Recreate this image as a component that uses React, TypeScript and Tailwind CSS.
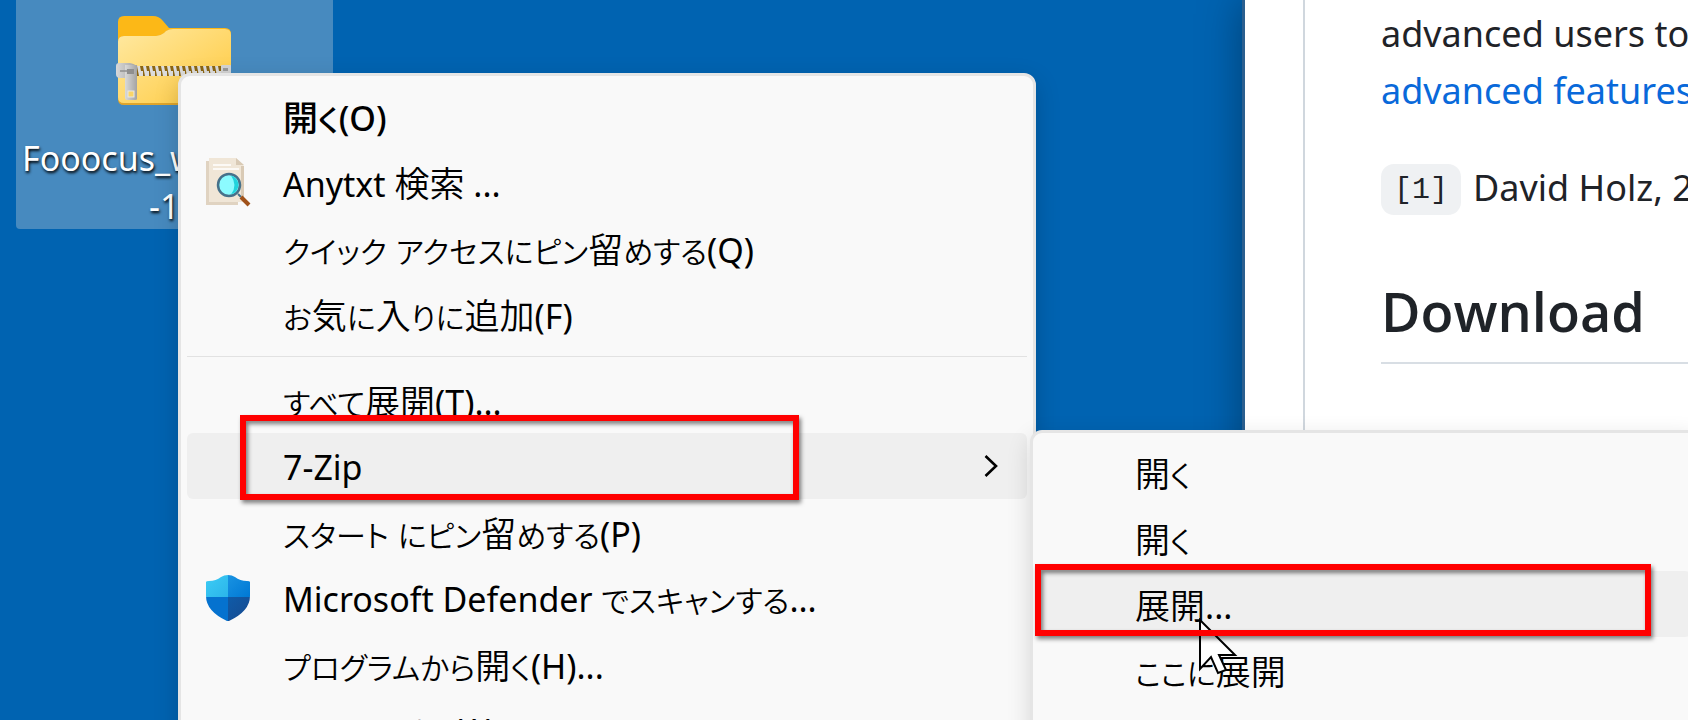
import { Fragment, type ReactNode } from "react";

type Run = { text: string; kind: "latin" | "kanji" | "kana" };

function splitRuns(text: string): Run[] {
  const parts = text.match(/[\u3040-\u30ff]+|[\u4e00-\u9fff]+|[^\u3040-\u30ff\u4e00-\u9fff]+/g) ?? [];
  return parts.map((part) => ({
    text: part,
    kind: /^[\u3040-\u30ff]/.test(part) ? "kana" : /^[\u4e00-\u9fff]/.test(part) ? "kanji" : "latin",
  }));
}

function Label({ text, bold }: { text: string; bold?: boolean }) {
  const weight = bold ? "font-medium" : "font-[350]";
  return (
    <span className="pt-px whitespace-pre">
      {splitRuns(text).map((run, i) =>
        run.kind === "latin" ? (
          <Fragment key={i}>{run.text}</Fragment>
        ) : run.kind === "kanji" ? (
          <span key={i} className={`font-['Noto_Sans_CJK_JP',sans-serif] text-[35px] ${weight}`}>{run.text}</span>
        ) : (
          <span key={i} className={`font-['Noto_Sans_CJK_JP',sans-serif] text-[30px] [font-feature-settings:'palt'] ${weight}`}>{run.text}</span>
        ),
      )}
    </span>
  );
}

function MenuItem({
  text,
  icon,
  bold,
  active,
  submenu,
}: {
  text: string;
  icon?: ReactNode;
  bold?: boolean;
  active?: boolean;
  submenu?: boolean;
}) {
  return (
    <li>
      <button
        type="button"
        className={`flex h-[66px] w-full items-center rounded-md pr-[29px] text-left text-[34px] leading-[48px] text-black ${
          active ? "bg-[#efefef]" : ""
        } ${bold ? "font-medium" : "font-normal"}`}
      >
        <span className="flex w-24 shrink-0 items-center pl-[18px]">{icon}</span>
        <Label text={text} bold={bold} />
        {submenu && (
          <svg className="ml-auto" width="14" height="22" viewBox="0 0 14 22" aria-hidden="true">
            <path d="M1.5 1 L12 11 L1.5 21" fill="none" stroke="#000" strokeWidth="2.6" />
          </svg>
        )}
      </button>
    </li>
  );
}

function FolderIcon() {
  const teeth = Array.from({ length: 14 }, (_, i) => i);
  return (
    <svg width="116" height="92" viewBox="116 14 116 92" aria-hidden="true">
      <defs>
        <linearGradient id="front" x1="0" y1="0" x2="1" y2="1">
          <stop offset="0" stopColor="#ffe9a2" />
          <stop offset="1" stopColor="#ffc93c" />
        </linearGradient>
        <linearGradient id="metal" x1="0" y1="0" x2="1" y2="0">
          <stop offset="0" stopColor="#d9d9d9" />
          <stop offset="1" stopColor="#a3a3a3" />
        </linearGradient>
      </defs>
      <path d="M118 22 q0-6 6-6 h29 q6 0 10 5 l6 7 h56 q6 0 6 6 v20 h-113z" fill="#fcb817" />
      <path d="M118 42 q0-6 6-6 h32 q4 0 8-3 l2-2 q3-2 7-2 h52 q6 0 6 6 v64 q0 6-6 6 h-101 q-6 0-6-6z" fill="#e0a52c" />
      <path d="M118 42 q0-6 6-6 h32 q4 0 8-3 l2-2 q3-2 7-2 h52 q6 0 6 6 v62 q0 6-6 6 h-101 q-6 0-6-6z" fill="url(#front)" />
      <rect x="136" y="66" width="86" height="10" fill="#8c6510" />
      {teeth.map((i) => (
        <path key={i} d={`M${137 + i * 6} 66 h3 l1 5 h2 v5 h-4z`} fill="#dcdcdc" />
      ))}
      <rect x="221" y="65" width="10" height="11" rx="1" fill="#d4d4d4" />
      <rect x="223" y="68" width="5" height="3" fill="#9a9a9a" />
      <path d="M116 66 q0-3 3-3 h11 q6 1 6 4 v11 h-16 q-4 0-4-4z" fill="url(#metal)" />
      <path d="M125 65 h12 v34 q0 1-2 1 h-8 q-2 0-2-2z" fill="url(#metal)" />
      <path d="M120 71 h8" stroke="#8f8f8f" strokeWidth="1.5" />
      <rect x="127" y="69" width="7" height="5" fill="#8f8f8f" />
      <rect x="128" y="91" width="6" height="6" fill="#f9d568" stroke="#e8e8e8" />
    </svg>
  );
}

function AnytxtIcon() {
  return (
    <svg width="46" height="50" viewBox="0 0 46 50" aria-hidden="true">
      <path d="M1 4 h32 v44 h-32z" fill="#e0d3c1" />
      <path d="M4 1 h27 l8 8 v36 h-35z" fill="#f0e6d7" />
      <path d="M31 1 v7 h8z" fill="#d9cab5" />
      <path d="M36 9 h3 v32 h-3z" fill="#d9cab5" />
      <path d="M8 8 h18 M8 12 h26" stroke="#fff" strokeWidth="1.5" />
      <path d="M33 37 l3 3" stroke="#47718a" strokeWidth="2" />
      <path d="M36 40 l8 8" stroke="#a0521a" strokeWidth="4" />
      <circle cx="24" cy="28" r="11" fill="#8cfbff" stroke="#47718a" strokeWidth="2.5" />
      <path d="M26 18.5 a9.8 9.8 0 0 1 0 19 q7-9 0-19z" fill="#21d3dc" />
    </svg>
  );
}

function ShieldIcon() {
  return (
    <svg width="46" height="46" viewBox="-1 0 46 46" aria-hidden="true">
      <defs>
        <clipPath id="shield">
          <path d="M22 0 q4 0 7 2 q5 4 12 4 q3 0 3 1 v14 q0 15-21 25 h-2 q-21-10-21-25 v-14 q0-1 3-1 q7 0 12-4 q3-2 7-2z" />
        </clipPath>
        <linearGradient id="tl" x1="0" y1="0" x2="1" y2="1"><stop stopColor="#3dccf5" /><stop offset="1" stopColor="#2bb5ea" /></linearGradient>
        <linearGradient id="tr" x1="0" y1="0" x2="1" y2="1"><stop stopColor="#1993e2" /><stop offset="1" stopColor="#0078d4" /></linearGradient>
        <linearGradient id="br" x1="0" y1="0" x2="1" y2="1"><stop stopColor="#0f5ba8" /><stop offset="1" stopColor="#174a90" /></linearGradient>
      </defs>
      <g clipPath="url(#shield)">
        <path d="M0 0 h22 v22 h-22z" fill="url(#tl)" />
        <path d="M22 0 h22 v22 h-22z" fill="url(#tr)" />
        <path d="M0 22 h22 v24 h-22z" fill="#0572cf" />
        <path d="M22 22 h22 v24 h-22z" fill="url(#br)" />
      </g>
    </svg>
  );
}

export default function App() {
  return (
    <div className="relative flex h-screen justify-between overflow-hidden bg-[#0063b1] font-['Noto_Sans','Noto_Sans_CJK_JP',sans-serif]">
      <section className="ml-4 h-[229px] w-[317px] rounded-b-sm bg-[#478abf] pt-[14px] text-[34px] leading-[48px] text-white">
        <div className="pl-[100px]">
          <FolderIcon />
        </div>
        <p className="mt-7 pl-[6px] [text-shadow:1px_2px_3px_#000]">Fooocus_w</p>
        <p className="pl-[133px] [text-shadow:1px_2px_3px_#000]">-1</p>
      </section>

      <main className="w-[446px] border-l-[3px] border-[#2b5f8f] bg-white pl-[58px] text-[#1f2328] shadow-[0_0_40px_rgba(0,0,0,0.35)]">
        <article className="h-full border-l-2 border-[#d0d7de] pt-[5px] pl-[76px] text-[36px] leading-[57px]">
          <p className="whitespace-nowrap">
            advanced users to
            <br />
            <a href="#features" className="text-[#0969da]">advanced features</a>
          </p>
          <p className="mt-10 flex items-center gap-3 whitespace-nowrap">
            <code className="mt-1 rounded-[13px] bg-[#eff1f3] px-[13px] pt-[2px] font-['Liberation_Mono',monospace] text-[30px] leading-[49px]">[1]</code>
            David Holz, 2
          </p>
          <h2 className="mt-12 border-b-2 border-[#d8dee4] pb-1 font-['Open_Sans',sans-serif] text-[54px] leading-[94px] font-semibold">Download</h2>
        </article>
      </main>

      <ul className="absolute top-[73px] left-[178px] h-[760px] w-[858px] rounded-xl border-[3px] border-[#e5e5e5] bg-[#f9f9f9] px-[6px] pt-[7px] shadow-[0_8px_24px_rgba(0,0,0,0.18)]">
        <MenuItem text="開く(O)" bold />
        <MenuItem text="Anytxt 検索 ..." icon={<AnytxtIcon />} />
        <MenuItem text="クイック アクセスにピン留めする(Q)" />
        <MenuItem text="お気に入りに追加(F)" />
        <li className="h-5 pt-[9px]" role="separator">
          <div className="border-t border-[#e2e2e2]" />
        </li>
        <MenuItem text="すべて展開(T)..." />
        <MenuItem text="7-Zip" active submenu />
        <MenuItem text="スタート にピン留めする(P)" />
        <MenuItem text="Microsoft Defender でスキャンする..." icon={<ShieldIcon />} />
        <MenuItem text="プログラムから開く(H)..." />
        <MenuItem text="パスのコピー(A)" />
      </ul>

      <ul className="absolute top-[430px] right-[-12px] left-[1030px] h-[400px] rounded-xl border-[3px] border-[#e5e5e5] bg-[#f9f9f9] px-[6px] pt-[6px] shadow-[0_8px_24px_rgba(0,0,0,0.14)]">
        <MenuItem text="開く" />
        <MenuItem text="開く" />
        <MenuItem text="展開..." active />
        <MenuItem text="ここに展開" />
      </ul>

      <svg className="absolute top-[618px] left-[1199px]" width="40" height="58" viewBox="0 0 40 58" aria-hidden="true">
        <path d="M1 2 V51 L12 39 L19 55 L27 52 L20 37 H36 Z" fill="#fff" stroke="#000" strokeWidth="2" />
      </svg>

      <div className="absolute top-[415px] left-[240px] h-[85px] w-[559px] border-[6px] border-[#ff0000] [filter:drop-shadow(2px_3px_2px_rgba(0,0,0,0.5))]" />
      <div className="absolute top-[564px] left-[1035px] h-[72px] w-[616px] border-[6px] border-[#ff0000] [filter:drop-shadow(2px_3px_2px_rgba(0,0,0,0.5))]" />
    </div>
  );
}
